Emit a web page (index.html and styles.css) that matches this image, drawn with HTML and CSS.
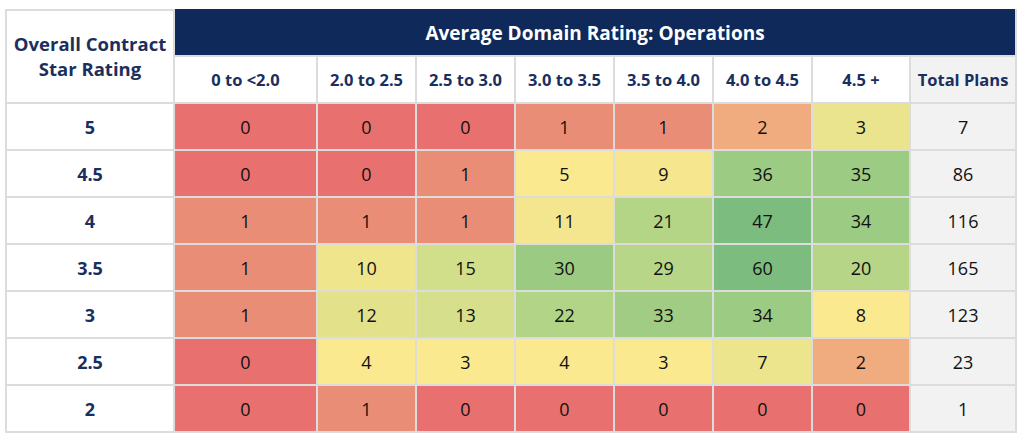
FILE: index.html
```html
<!DOCTYPE html>
<html>
<head>
<meta charset="utf-8">
<link rel="stylesheet" href="styles.css">
</head>
<body>
<div class="wrap">
<table class="heat">
  <colgroup>
    <col class="c-label"><col class="c-first"><col class="c-std"><col class="c-std"><col class="c-std"><col class="c-std"><col class="c-std"><col class="c-last"><col class="c-total">
  </colgroup>
  <thead>
    <tr class="r-top">
      <th class="corner" rowspan="2">Overall Contract<br>Star Rating</th>
      <th class="banner" colspan="8">Average Domain Rating: Operations</th>
    </tr>
    <tr class="r-sub">
      <th>0 to &lt;2.0</th>
      <th>2.0 to 2.5</th>
      <th>2.5 to 3.0</th>
      <th>3.0 to 3.5</th>
      <th>3.5 to 4.0</th>
      <th>4.0 to 4.5</th>
      <th>4.5 +</th>
      <th class="total">Total Plans</th>
    </tr>
  </thead>
  <tbody>
    <tr>
      <th>5</th>
      <td class="v0">0</td><td class="v0">0</td><td class="v0">0</td><td class="v1">1</td><td class="v1">1</td><td class="v2">2</td><td class="v3g">3</td><td class="total">7</td>
    </tr>
    <tr>
      <th>4.5</th>
      <td class="v0">0</td><td class="v0">0</td><td class="v1">1</td><td class="vy">5</td><td class="v9">9</td><td class="v36">36</td><td class="v36">35</td><td class="total">86</td>
    </tr>
    <tr>
      <th>4</th>
      <td class="v1">1</td><td class="v1">1</td><td class="v1">1</td><td class="v11">11</td><td class="v21">21</td><td class="v47">47</td><td class="v36">34</td><td class="total">116</td>
    </tr>
    <tr>
      <th>3.5</th>
      <td class="v1">1</td><td class="v10">10</td><td class="v15">15</td><td class="v30">30</td><td class="v29">29</td><td class="v47">60</td><td class="v20">20</td><td class="total">165</td>
    </tr>
    <tr>
      <th>3</th>
      <td class="v1">1</td><td class="v12">12</td><td class="v13">13</td><td class="v22">22</td><td class="v33">33</td><td class="v36">34</td><td class="vy">8</td><td class="total">123</td>
    </tr>
    <tr>
      <th>2.5</th>
      <td class="v0">0</td><td class="vy">4</td><td class="vy">3</td><td class="vy">4</td><td class="vy">3</td><td class="v7">7</td><td class="v2">2</td><td class="total">23</td>
    </tr>
    <tr>
      <th>2</th>
      <td class="v0">0</td><td class="v1">1</td><td class="v0">0</td><td class="v0">0</td><td class="v0">0</td><td class="v0">0</td><td class="v0">0</td><td class="total">1</td>
    </tr>
  </tbody>
</table>
</div>
</body>
</html>
```

FILE: styles.css
```css
html, body {
  margin: 0;
  padding: 0;
  background: #ffffff;
}
.wrap {
  padding: 9px 0 0 5px;
}
.heat {
  border-collapse: collapse;
  table-layout: fixed;
  width: 1010px;
  font-family: "Open Sans", "Noto Sans", sans-serif;
}
.c-label { width: 168px; }
.c-first { width: 143px; }
.c-std { width: 99px; }
.c-last { width: 98px; }
.c-total { width: 106px; }
.heat th, .heat td {
  border: 2px solid #dcdcdc;
  padding: 0;
  text-align: center;
  vertical-align: middle;
  height: 47px;
  box-sizing: border-box;
  white-space: nowrap;
}
.heat th {
  color: #1a2f5e;
  font-weight: 700;
  font-size: 16.5px;
}
.heat td {
  color: #111111;
  font-size: 18px;
  font-weight: 400;
}
.r-top th { height: 46px; }
.corner {
  font-size: 18.5px !important;
  line-height: 25px;
  background: #ffffff;
  padding-bottom: 2px !important;
}
.banner {
  background: #0f2a5a;
  color: #ffffff !important;
  font-size: 19px !important;
  border-color: #0f2a5a #dcdcdc #dcdcdc #0f2a5a !important;
}
tbody th {
  font-size: 18px !important;
  background: #ffffff;
}
.total { background: #f2f2f2; }
.v0 { background: #e8716f; }
.v1 { background: #ea8d77; }
.v2 { background: #f0ac7e; }
.v3g { background: #eae48f; }
.vy { background: #fbe98f; }
.v7 { background: #ece58e; }
.v9 { background: #f6e78e; }
.v10 { background: #eee58c; }
.v11 { background: #f3e68e; }
.v12 { background: #e4e18b; }
.v13 { background: #d6df8b; }
.v15 { background: #d1de8a; }
.v20 { background: #b6d587; }
.v21 { background: #b4d586; }
.v22 { background: #b1d486; }
.v29 { background: #b7d688; }
.v30 { background: #9bcb82; }
.v33 { background: #a0cc83; }
.v36 { background: #9ccb83; }
.v47 { background: #7cbc7e; }
```
